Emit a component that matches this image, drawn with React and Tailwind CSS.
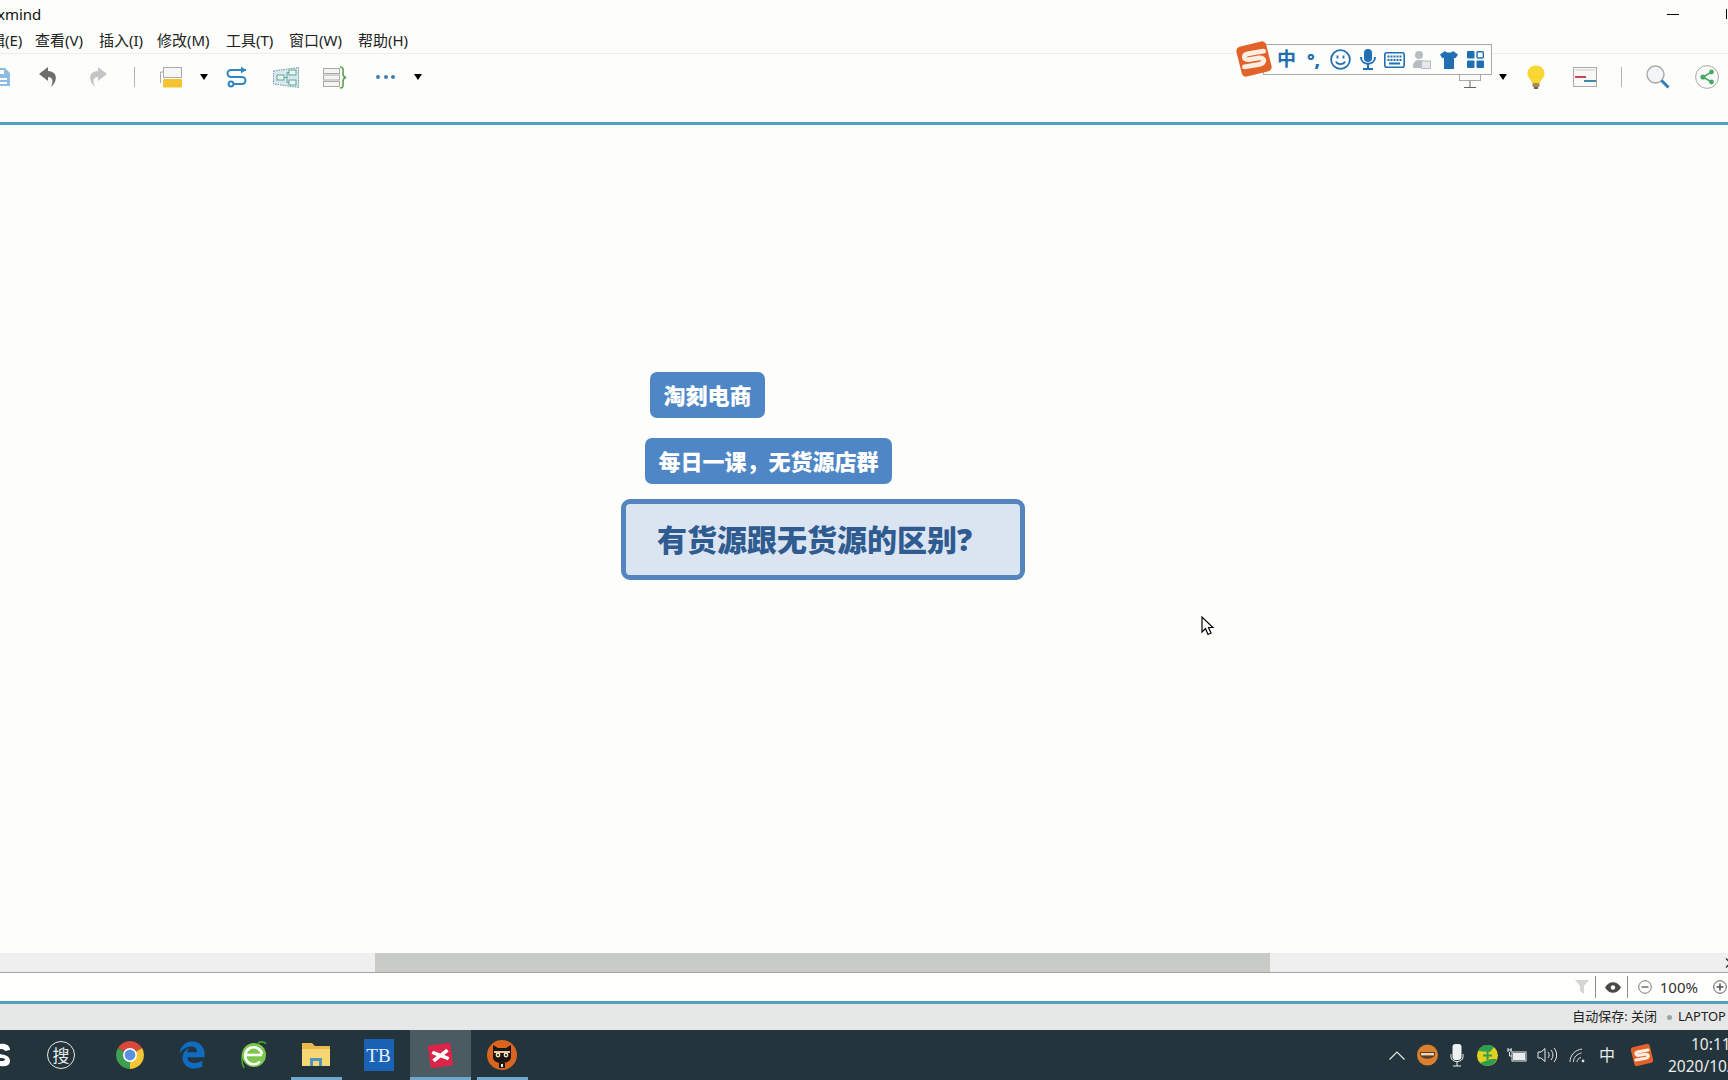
import React from 'react';
import { FaEdgeLegacy } from 'react-icons/fa';

const cjk = { fontFamily: '"Noto Sans", "Noto Sans CJK SC", sans-serif' };

const menus = [
  { label: '编辑(E)', className: 'ml-[-25px] w-[60px]' },
  { label: '查看(V)', className: 'w-[64px]' },
  { label: '插入(I)', className: 'w-[58px]' },
  { label: '修改(M)', className: 'w-[69px]' },
  { label: '工具(T)', className: 'w-[63px]' },
  { label: '窗口(W)', className: 'w-[69px]' },
  { label: '帮助(H)', className: 'w-[60px]' },
];

function Caret({ className }) {
  return <div className={`h-0 w-0 border-x-[4.5px] border-t-[6px] border-x-transparent border-t-black ${className}`} />;
}

function Sep({ className }) {
  return <div className={`h-[20px] w-px bg-[#b4b4b4] ${className}`} />;
}

function Undo({ color, className }) {
  return (
    <svg className={className} width="18" height="20" viewBox="0 0 18 20">
      <path d="M9 0 L0 7 L9 14 V10 C13 10 15 13 12 20 C18 15 20 5 9 4 Z" fill={color} />
    </svg>
  );
}

function Redo({ color, className }) {
  return (
    <svg className={className} width="18" height="20" viewBox="0 0 18 20">
      <path d="M9 0 L18 7 L9 14 V10 C5 10 3 13 6 20 C0 15 -2 5 9 4 Z" fill={color} />
    </svg>
  );
}

function Toolbar() {
  return (
    <div className="flex h-[68px] items-center pb-[22px]">
      <svg className="ml-[-8px]" width="18" height="20" viewBox="0 0 18 20">
        <path d="M1 1 H13 L18 6 V19 H1 Z" fill="#8cbbe3" />
        <rect x="5" y="3" width="7" height="4" fill="#fff" />
        <rect x="5" y="11" width="10" height="2" fill="#fff" />
        <rect x="5" y="15" width="10" height="2" fill="#fff" />
      </svg>
      <Undo color="#6d6d6d" className="ml-[29px]" />
      <Redo color="#c5c5c5" className="ml-[32px]" />
      <Sep className="ml-[27px]" />
      <svg className="ml-[25px]" width="22" height="21" viewBox="0 0 22 21">
        <rect x="3.5" y="0.5" width="18" height="10" fill="#f6f6f4" stroke="#aaa" />
        <path d="M0.5 5 V16" stroke="#aaa" />
        <path d="M0.5 5 H3" stroke="#aaa" />
        <rect x="3" y="12" width="19" height="8.5" rx="1" fill="#f4c430" />
      </svg>
      <Caret className="ml-[18px]" />
      <svg className="ml-[17px]" width="23" height="22" viewBox="0 0 23 22" fill="none" stroke="#2f86c1" strokeWidth="2">
        <path d="M21 4 H6 A3.5 3.5 0 0 0 6 11 H17 A3.5 3.5 0 0 1 17 18 H8" />
        <path d="M16 0.5 L21 4 L16 7.5" fill="#2f86c1" stroke="none" />
        <circle cx="6" cy="18" r="2.4" />
      </svg>
      <svg className="ml-[25px]" width="26" height="21" viewBox="0 0 26 21" fill="none">
        <path d="M0.5 4 L25.5 0.5 V20.5 L0.5 17 Z" fill="#d8e8ee" stroke="#6c96a8" strokeDasharray="1.5 1" />
        <rect x="4" y="8" width="7" height="5" fill="#eef5ee" stroke="#5fa89a" />
        <rect x="16" y="3" width="7" height="5" fill="#eef5ee" stroke="#5fa89a" />
        <rect x="16" y="13" width="7" height="5" fill="#eef5ee" stroke="#5fa89a" />
        <path d="M11 10.5 H14 M14 5.5 V15.5 M14 5.5 H16 M14 15.5 H16" stroke="#5fa89a" />
      </svg>
      <svg className="ml-[24px]" width="24" height="23" viewBox="0 0 24 23" fill="none">
        <rect x="0.5" y="2.5" width="16" height="5" fill="#f4f4f2" stroke="#aaa" />
        <rect x="0.5" y="9" width="16" height="5" fill="#f4f4f2" stroke="#aaa" />
        <rect x="0.5" y="15.5" width="16" height="5" fill="#f4f4f2" stroke="#aaa" />
        <path d="M17 1 C21 1 20 4 20 8 C20 10 21 11 23 11.5 C21 12 20 13 20 15 C20 19 21 22 17 22" stroke="#5ba052" strokeWidth="1.6" />
      </svg>
      <div className="ml-[29px] flex w-[19px] justify-between">
        <div className="h-[4px] w-[4px] rounded-full bg-[#3f7fb0]" />
        <div className="h-[4px] w-[4px] rounded-full bg-[#3f7fb0]" />
        <div className="h-[4px] w-[4px] rounded-full bg-[#3f7fb0]" />
      </div>
      <Caret className="ml-[19px]" />

      <svg className="ml-auto" width="22" height="24" viewBox="0 0 22 24" fill="none">
        <rect x="0.5" y="0.5" width="21" height="15" fill="#fbfbf8" stroke="#aaa" />
        <path d="M9 6 H15 L13 10 H9 Z" fill="#e0b75c" />
        <path d="M11 16 V22 M5 22.5 H17" stroke="#666" />
      </svg>
      <Caret className="ml-[18px]" />
      <svg className="ml-[20px]" width="18" height="24" viewBox="0 0 18 24">
        <path d="M9 0.5 C14 0.5 17.5 4 17.5 8.5 C17.5 12.5 14 14.5 13 18 H5 C4 14.5 0.5 12.5 0.5 8.5 C0.5 4 4 0.5 9 0.5 Z" fill="#f8d734" />
        <rect x="5.5" y="18" width="7" height="4" rx="1" fill="#a58a52" />
        <rect x="7" y="22" width="4" height="2" fill="#6e6248" />
      </svg>
      <svg className="ml-[28px]" width="24" height="20" viewBox="0 0 24 20" fill="none">
        <rect x="0.5" y="0.5" width="23" height="19" fill="#f8f8f6" stroke="#aaa" />
        <path d="M2 3 H22" stroke="#ccc" />
        <rect x="2" y="9" width="11" height="2" fill="#c9465c" />
        <rect x="11" y="13" width="12" height="2" fill="#3f8aa8" />
      </svg>
      <Sep className="ml-[24px]" />
      <svg className="ml-[24px]" width="24" height="24" viewBox="0 0 24 24" fill="none">
        <circle cx="9.5" cy="9.5" r="8.5" fill="#f2f6f8" stroke="#a8a8a8" strokeWidth="1.4" />
        <path d="M15.5 15.5 L22.5 22.5" stroke="#2f7fb6" strokeWidth="3" />
      </svg>
      <svg className="ml-[25px] mr-[9px]" width="24" height="24" viewBox="0 0 24 24" fill="none">
        <circle cx="12" cy="12" r="11.4" fill="#fafbf8" stroke="#a8a8a8" />
        <path d="M16.5 7 L8 12 L16.5 17" stroke="#4ca866" strokeWidth="1.6" />
        <circle cx="16.5" cy="7" r="2.4" fill="#4ca866" />
        <circle cx="8" cy="12" r="2.6" fill="#4ca866" />
        <circle cx="16.5" cy="17" r="2.4" fill="#4ca866" />
      </svg>
    </div>
  );
}

// sogou logo, used in the floating bar and in the tray
function SogouS({ size }) {
  return (
    <svg width={size} height={size} viewBox="0 0 36 36" fill="none">
      <rect x="3.5" y="3.5" width="29" height="29" rx="4" fill="#e2622a" transform="rotate(-14 18 18)" />
      <path d="M27 10.5 L13 13 C7 14 8 19 13 18.5 L23 17 C28.5 16.5 29 21.5 23 23 L9 25.5" stroke="#fdeee2" strokeWidth="4.6" strokeLinecap="round" />
    </svg>
  );
}

function SogouBar() {
  const blue = '#1f6fb2';
  return (
    <div className="absolute left-[1263px] top-[44px] flex h-[31px] w-[229px] items-center border border-[#aaaaaa] bg-[#fdfefb] pl-[9px]">
      <div className="absolute left-[-29px] top-[-5px]">
        <SogouS size={38} />
      </div>
      <div className="flex w-[27px] justify-center text-[19px] font-bold leading-none text-[#1f6fb2]" style={cjk}>中</div>
      <div className="flex w-[27px] justify-center text-[18px] font-black leading-none text-[#1f6fb2]" style={cjk}>°,</div>
      <div className="flex w-[27px] justify-center">
        <svg width="21" height="21" viewBox="0 0 21 21" fill="none" stroke={blue} strokeWidth="1.8">
          <circle cx="10.5" cy="10.5" r="9.4" />
          <path d="M7.5 6.5 V9.5 M13.5 6.5 V9.5" />
          <path d="M6 12.5 C7.5 16 13.5 16 15 12.5" />
        </svg>
      </div>
      <div className="flex w-[27px] justify-center">
        <svg width="16" height="21" viewBox="0 0 16 21" fill="none" stroke={blue} strokeWidth="2">
          <rect x="4" y="0" width="8" height="13" rx="4" fill={blue} stroke="none" />
          <path d="M1 8 C1 17 15 17 15 8 M8 15 V20 M3 20 H13" />
        </svg>
      </div>
      <div className="flex w-[27px] justify-center">
        <svg width="21" height="16" viewBox="0 0 21 16">
          <rect x="0.8" y="0.8" width="19.4" height="14.4" rx="2" fill="none" stroke={blue} strokeWidth="1.6" />
          <path d="M3.5 4.5 H17.5 M3.5 8 H17.5" stroke={blue} strokeWidth="2" strokeDasharray="2 1" />
          <path d="M5 11.5 H16" stroke={blue} strokeWidth="2" />
        </svg>
      </div>
      <div className="flex w-[27px] justify-center">
        <svg width="19" height="18" viewBox="0 0 19 18">
          <circle cx="7" cy="4" r="4" fill="#b4bcc4" />
          <path d="M1 17 C1 10 4 9 7 9 C9 9 10 9 11 10 H9 V17 Z" fill="#b4bcc4" />
          <rect x="9.5" y="10" width="9" height="7.5" fill="#e6e8ea" stroke="#b4bcc4" />
        </svg>
      </div>
      <div className="flex w-[27px] justify-center">
        <svg width="18" height="18" viewBox="0 0 18 18">
          <path d="M5 0 C6.5 2 11.5 2 13 0 L18 3.5 L15.5 7.5 L14 6.5 V18 H4 V6.5 L2.5 7.5 L0 3.5 Z" fill={blue} />
        </svg>
      </div>
      <div className="flex w-[27px] justify-center">
        <svg width="17" height="17" viewBox="0 0 17 17">
          <rect x="0" y="0" width="7.5" height="7.5" rx="1" fill={blue} />
          <rect x="10" y="0.7" width="6.3" height="6.3" rx="1" fill="#fff" stroke={blue} strokeWidth="1.4" />
          <rect x="0" y="9.5" width="7.5" height="7.5" rx="1" fill={blue} />
          <rect x="9.5" y="9.5" width="7.5" height="7.5" rx="1" fill={blue} />
        </svg>
      </div>
    </div>
  );
}

function Canvas() {
  return (
    <div className="relative flex-1 bg-[#fdfefb]">
      <div className="absolute left-[650px] top-[247px] flex h-[46px] w-[115px] items-center justify-center rounded-[7px] bg-[#4f86c6] text-[22px] font-black text-white" style={cjk}>
        淘刻电商
      </div>
      <div className="absolute left-[645px] top-[313px] flex h-[46px] w-[247px] items-center justify-center rounded-[7px] bg-[#4f86c6] text-[22px] font-black text-white" style={cjk}>
        每日一课，无货源店群
      </div>
      <div className="absolute left-[621px] top-[374px] flex h-[81px] w-[404px] items-center rounded-[9px] border-[5px] border-[#5585bf] bg-[#dbe5f1] pl-[31px] text-[30px] font-black text-[#2f5b90]" style={cjk}>
        有货源跟无货源的区别?
      </div>
      <svg className="absolute left-[1201px] top-[491px]" width="13" height="21" viewBox="0 0 13 21">
        <path d="M1 1 V16 L4.5 12.5 L7 18.5 L10 17 L7.5 11.5 H12 Z" fill="#fff" stroke="#000" strokeWidth="1.2" />
      </svg>
    </div>
  );
}

function Scrollbar() {
  return (
    <div className="flex h-[20px] items-start border-b border-[#a5a5a5] bg-[#eeefee]">
      <div className="ml-[375px] h-[19px] w-[895px] bg-[#c9cbc9]" />
      <svg className="ml-auto mr-[-4px] mt-[5px]" width="7" height="10" viewBox="0 0 7 10" fill="none" stroke="#333" strokeWidth="1.4">
        <path d="M1 0.5 L5.5 5 L1 9.5" />
      </svg>
    </div>
  );
}

function ZoomBar() {
  return (
    <div className="flex h-[28px] items-center justify-end bg-[#fefffd]">
      <svg width="14" height="14" viewBox="0 0 14 14">
        <path d="M0 0 H14 L9 6 V14 L5 11 V6 Z" fill="#d4d6d4" />
      </svg>
      <div className="ml-[6px] h-[22px] w-px bg-[#8f8f8f]" />
      <svg className="ml-[9px]" width="16" height="11" viewBox="0 0 16 11">
        <path d="M0 5.5 C4 -1.5 12 -1.5 16 5.5 C12 12.5 4 12.5 0 5.5 Z" fill="#4a4a4a" />
        <circle cx="8" cy="5.5" r="2.2" fill="#fff" />
      </svg>
      <div className="ml-[6px] h-[22px] w-px bg-[#8f8f8f]" />
      <svg className="ml-[10px]" width="14" height="14" viewBox="0 0 14 14" fill="none" stroke="#777">
        <circle cx="7" cy="7" r="6.3" />
        <path d="M3.5 7 H10.5" strokeWidth="1.6" />
      </svg>
      <div className="ml-[8px] text-[15px] leading-none text-[#333]" style={cjk}>100%</div>
      <svg className="ml-[15px] mr-[1px]" width="14" height="14" viewBox="0 0 14 14" fill="none" stroke="#555">
        <circle cx="7" cy="7" r="6.3" />
        <path d="M3.5 7 H10.5 M7 3.5 V10.5" strokeWidth="1.6" />
      </svg>
    </div>
  );
}

function StatusBar() {
  return (
    <div className="flex h-[26px] items-center justify-end bg-[#e6e8e7] text-[13px] text-[#222]" style={cjk}>
      <span>自动保存: 关闭</span>
      <div className="ml-[10px] h-[5px] w-[5px] rounded-full bg-[#9aa5a5]" />
      <span className="ml-[6px] w-[50px] whitespace-nowrap">LAPTOP</span>
    </div>
  );
}

function Slot({ className, under, children }) {
  return (
    <div className={`relative flex h-full items-center justify-center ${className}`}>
      {children}
      {under && <div className={`absolute bottom-0 h-[3px] bg-[#6fa8cf] ${under}`} />}
    </div>
  );
}

function Taskbar() {
  return (
    <div className="flex h-[50px] items-center bg-[#23343c]">
      <svg className="mr-[37px]" width="10" height="24" viewBox="0 0 10 24">
        <path d="M0 1 C5 0 10 2 10 7 L5 8 C4 6 2 6 0 6 Z M0 11 C5 12 10 13 10 18 C10 23 4 24 0 23 V18 C2 18 4 18 5 17 C5 15 2 15 0 15 Z" fill="#fff" />
      </svg>
      <div className="flex h-[28px] w-[28px] shrink-0 items-center justify-center rounded-full border border-[#e8ecec] text-[17px] leading-none text-[#e8ecec]" style={cjk}>
        搜
      </div>
      <div className="w-[24px]" />
      <Slot className="w-[62px]">
        <svg width="28" height="28" viewBox="0 0 28 28">
          <path d="M14 14 L1.9 7 A14 14 0 0 1 26.1 7 Z" fill="#d8493b" />
          <path d="M14 14 L26.1 7 A14 14 0 0 1 14 28 Z" fill="#f4c534" />
          <path d="M14 14 L14 28 A14 14 0 0 1 1.9 7 Z" fill="#3f9e50" />
          <circle cx="14" cy="14" r="7" fill="#fff" />
          <circle cx="14" cy="14" r="5.4" fill="#5b8fe0" />
        </svg>
      </Slot>
      <Slot className="w-[62px]">
        <FaEdgeLegacy size={28} color="#0f6cc0" />
      </Slot>
      <Slot className="w-[62px]">
        <svg width="30" height="30" viewBox="0 0 30 30" fill="none">
          <path d="M5 28 C2 22 2 14 6 9 M19 3 C23 1 26 2 27 4" stroke="#4aa32d" strokeWidth="1.6" />
          <circle cx="15" cy="15" r="12" fill="#7cc84e" />
          <path d="M7 15 H23" stroke="#fff" strokeWidth="2.6" />
          <path d="M23 14 A8.5 8.5 0 1 0 21 21.5" stroke="#fff" strokeWidth="2.6" />
          <path d="M10 12 H20 C19 9 11 9 10 12 Z" fill="#7cc84e" />
        </svg>
      </Slot>
      <Slot className="w-[62px]" under="w-[51px]">
        <svg width="28" height="26" viewBox="0 0 28 26">
          <path d="M0 1 H10 L13 4 H28 V24 H0 Z" fill="#e9b949" />
          <rect x="0" y="7" width="28" height="17" fill="#f7d774" />
          <path d="M8 24 V16 H20 V24 H17 V19 H11 V24 Z" fill="#4f93c0" />
        </svg>
      </Slot>
      <Slot className="w-[63px]">
        <div className="flex h-[32px] w-[30px] items-center justify-center bg-[#1a62b5] text-[19px] leading-none text-[#e8eef6]" style={{ fontFamily: '"Liberation Serif", serif' }}>
          TB
        </div>
      </Slot>
      <Slot className="w-[61px] bg-[#4a5b61]" under="w-full">
        <svg className="rotate-[-8deg]" width="23" height="23" viewBox="0 0 24 24">
          <rect x="0" y="0" width="24" height="24" rx="2" fill="#dc2448" />
          <path d="M5 6 L12 10 L19 6 L21 9 L16 12 L21 15 L19 18 L12 14 L5 18 L3 15 L8 12 L3 9 Z" fill="#fff" />
        </svg>
      </Slot>
      <Slot className="w-[62px]" under="w-[51px]">
        <svg width="30" height="30" viewBox="0 0 30 30">
          <circle cx="15" cy="15" r="15" fill="#d9651f" />
          <path d="M6 5 L11 8 H19 L24 5 V17 C24 21 20 23 15 23 C10 23 6 21 6 17 Z" fill="#1c1714" />
          <path d="M7 12 H23" stroke="#e8c9a0" strokeWidth="2" />
          <circle cx="11" cy="15" r="2.4" fill="#f4e4c8" />
          <circle cx="19" cy="15" r="2.4" fill="#f4e4c8" />
          <circle cx="11" cy="15" r="1" fill="#1c1714" />
          <circle cx="19" cy="15" r="1" fill="#1c1714" />
          <path d="M12 23 H18 V28 H12 Z" fill="#1c1714" />
          <rect x="14" y="24" width="2" height="3" fill="#eee" />
        </svg>
      </Slot>

      <div className="ml-auto flex h-full items-center">
        <Slot className="w-[30px]">
          <svg width="16" height="9" viewBox="0 0 16 9" fill="none" stroke="#e4e8e8" strokeWidth="1.2">
            <path d="M0.5 8.5 L8 1 L15.5 8.5" />
          </svg>
        </Slot>
        <Slot className="w-[30px]">
          <svg width="21" height="22" viewBox="0 0 21 22">
            <circle cx="10.5" cy="11" r="10.5" fill="#d9802f" />
            <path d="M3 8 H18 V11 C16 16 5 16 3 11 Z" fill="#5a4028" />
            <rect x="4" y="9" width="13" height="2.4" fill="#ecd8b0" />
          </svg>
        </Slot>
        <Slot className="w-[30px]">
          <svg width="14" height="23" viewBox="0 0 14 23" fill="none">
            <rect x="2.5" y="0" width="9" height="16" rx="3" fill="#eef1f1" />
            <path d="M1 10 V13 C1 19 13 19 13 13 V10 M7 18 V22 M3 22 H11" stroke="#eef1f1" />
          </svg>
        </Slot>
        <Slot className="w-[30px]">
          <svg width="21" height="21" viewBox="0 0 21 21">
            <circle cx="10.5" cy="10.5" r="10.5" fill="#e3d020" />
            <path d="M1 6 A10.5 10.5 0 0 1 17 2 L13 7 Z M3 18 A10.5 10.5 0 0 0 20 14 L14 14 Z" fill="#2f9e50" />
            <path d="M10.5 6 V15 M6 10.5 H15" stroke="#2f9e50" strokeWidth="2" />
          </svg>
        </Slot>
        <Slot className="w-[30px]">
          <svg width="20" height="14" viewBox="0 0 20 14" fill="none" stroke="#e8ecec">
            <rect x="5" y="4" width="14" height="9" />
            <rect x="6" y="5" width="12" height="7" fill="#e8ecec" stroke="none" />
            <path d="M0.5 2 H5 M1 0 V4 M4 0 V4 M2.5 4 V8 H5" />
          </svg>
        </Slot>
        <Slot className="w-[30px]">
          <svg width="20" height="16" viewBox="0 0 20 16" fill="none" stroke="#e8ecec">
            <path d="M1 5 H4 L8 1.5 V14.5 L4 11 H1 Z" />
            <path d="M11 5 C12.5 7 12.5 9 11 11 M14 3 C16.5 6 16.5 10 14 13 M17 1 C20.5 5 20.5 11 17 15" />
          </svg>
        </Slot>
        <Slot className="w-[30px]">
          <svg width="17" height="15" viewBox="0 0 17 15" fill="none" stroke="#d8dcdc">
            <path d="M1 14 C1 7 6 2 13 1 M4.5 14 C4.5 9 8 6 12.5 5 M8 14 C8 12 9.5 10 12 9.5" />
            <circle cx="14" cy="13" r="1.4" fill="#d8dcdc" stroke="none" />
          </svg>
        </Slot>
        <Slot className="w-[30px]">
          <span className="text-[16px] leading-none text-[#e8ecec]" style={cjk}>中</span>
        </Slot>
        <Slot className="ml-[5px] w-[30px]">
          <SogouS size={24} />
        </Slot>
        <div className="ml-[11px] flex w-[60px] shrink-0 flex-col whitespace-nowrap text-[15.5px] leading-[22px] text-[#e8ecec]" style={cjk}>
          <span className="pl-[23px]">10:11</span>
          <span>2020/10/15</span>
        </div>
      </div>
    </div>
  );
}

export default function App() {
  return (
    <div className="relative flex h-screen w-full flex-col overflow-hidden bg-[#fdfefb]" style={cjk}>
      <div className="flex h-[26px] items-center pt-[2px] text-[15px] leading-none text-[#111]">
        <span className="ml-[-3px]">xmind</span>
        <div className="ml-auto mr-[47px] h-px w-[12px] bg-black" />
        <div className="mr-[-1px] h-[10px] w-[3px] border-l border-black" />
      </div>
      <div className="flex h-[28px] items-center border-b border-[#ededed] pt-[1px] text-[15px] leading-none text-[#222]">
        {menus.map((m) => (
          <span key={m.label} className={`shrink-0 whitespace-nowrap ${m.className}`}>
            {m.label}
          </span>
        ))}
      </div>
      <Toolbar />
      <div className="h-[3px] bg-[#559fc0]" />
      <Canvas />
      <Scrollbar />
      <ZoomBar />
      <div className="h-[3px] bg-[#559fc0]" />
      <StatusBar />
      <Taskbar />
      <SogouBar />
    </div>
  );
}
